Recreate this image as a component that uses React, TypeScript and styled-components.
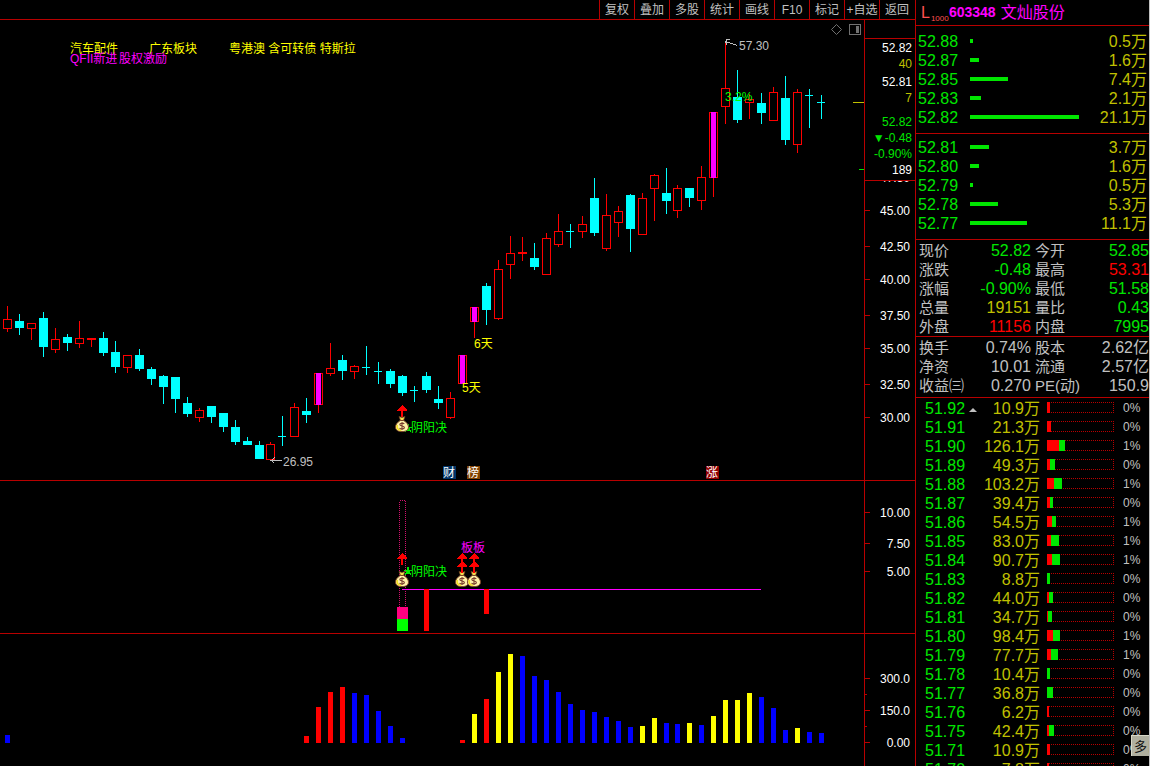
import React from "react";
import styled, { createGlobalStyle } from "styled-components";

const RED = "#ff0000";
const LINE = "#b80000";
const CYAN = "#00ffff";
const MAGENTA = "#ff00ff";
const YELLOW = "#ffff00";
const LIME = "#00ff00";
const GREEN = "#00e600";
const GOLD = "#c0c000";
const GREY = "#c0c0c0";
const WHITE = "#ffffff";
const BLUE = "#0000ff";

const GlobalStyle = createGlobalStyle`
  * { box-sizing: border-box; }
  body {
    margin: 0;
    background: #000;
    color: ${GREY};
    font-family: "Liberation Sans", "Noto Sans CJK SC", sans-serif;
    font-size: 12px;
  }
`;

const Screen = styled.div`
  display: grid;
  grid-template-columns: minmax(0, 1fr) 235px;
  height: 100vh;
  overflow: hidden;
`;

const Main = styled.main`
  display: flex;
  flex-direction: column;
  min-height: 0;
`;

const Toolbar = styled.nav`
  display: flex;
  justify-content: flex-end;
  height: 20px;
  padding-right: 1px;
  border-bottom: 1px solid ${LINE};
`;

const ToolButton = styled.button`
  width: 35px;
  padding: 0;
  border: 0;
  border-left: 1px solid ${LINE};
  background: transparent;
  color: ${GREY};
  font: inherit;
  line-height: 18px;
  white-space: nowrap;
`;

const Charts = styled.div`
  flex: 1;
  min-height: 0;
  display: grid;
  grid-template-columns: minmax(0, 1fr) 51px;
  grid-template-rows: 461fr 153fr 132fr;
`;

const Panel = styled.section<{ $last?: boolean }>`
  min-height: 0;
  overflow: hidden;
  border-bottom: ${(p) => (p.$last ? "0" : `1px solid ${LINE}`)};
`;

const Axis = styled(Panel)`
  position: relative;
  border-left: 1px solid ${LINE};
`;

const Plot = styled.svg`
  display: block;
  width: 100%;
  height: 100%;
  shape-rendering: crispEdges;
`;

const Label = styled.text<{ $color: string }>`
  fill: ${(p) => p.$color};
  font-size: 12px;
  white-space: pre;
`;

const AxisLabel = styled(Label)`
  text-anchor: end;
`;

const QuoteBox = styled.div`
  position: absolute;
  top: 18px;
  left: 0;
  right: 0;
  padding: 1px 3px 2px;
  border: solid ${LINE};
  border-width: 1px 0;
  background: #000;
  text-align: right;
  line-height: 16px;
`;

const QuoteGroup = styled.div<{ $gap?: number }>`
  margin-top: ${(p) => p.$gap ?? 0}px;
`;

const QuoteLine = styled.div<{ $color: string }>`
  color: ${(p) => p.$color};
  white-space: nowrap;
`;

const Sidebar = styled.aside`
  position: relative;
  min-height: 0;
  overflow: hidden;
  border-left: 1px solid ${LINE};
  border-right: 1px solid ${GREY};
  font-size: 16px;
  line-height: 19px;
`;

const Title = styled.header`
  display: flex;
  align-items: center;
  height: 26px;
  padding-left: 5px;
  border-bottom: 1px solid ${LINE};
  color: ${MAGENTA};
  white-space: nowrap;
`;

const Flag = styled.span`
  color: #ff5050;
`;

const FlagCount = styled.sub`
  align-self: flex-end;
  width: 18px;
  margin-left: 1px;
  color: #ff5050;
  font-size: 8px;
  line-height: 12px;
`;

const Code = styled.b`
  font-size: 14px;
`;

const Name = styled.h1`
  margin: 0 0 0 5px;
  font-size: 16px;
  font-weight: 400;
`;

const Block = styled.div<{ $top: number; $bottom: number }>`
  padding: ${(p) => p.$top}px 0 ${(p) => p.$bottom}px;
  border-bottom: 1px solid ${LINE};
`;

const Table = styled.table`
  width: 100%;
  table-layout: fixed;
  border-spacing: 0;
  td {
    height: 19px;
    padding: 0;
    white-space: nowrap;
  }
`;

const LevelTable = styled(Table)`
  margin-top: 1px;
`;

const PriceCell = styled.td<{ $indent: number; $width: number }>`
  width: ${(p) => p.$width}px;
  && { padding-left: ${(p) => p.$indent}px; }
  color: ${GREEN};
`;

const AmountCell = styled.td<{ $width: number }>`
  width: ${(p) => p.$width}px;
  && { padding-right: 2px; }
  color: ${GOLD};
  text-align: right;
`;

const DepthBar = styled.div`
  height: 4px;
  margin-bottom: 1px;
  background: ${GREEN};
`;

const Facts = styled.dl`
  display: grid;
  grid-template-columns: 115px minmax(0, 1fr);
  column-gap: 4px;
  margin: 0;
`;

const Fact = styled.div`
  display: flex;
  justify-content: space-between;
  height: 19px;
  white-space: nowrap;
  &:nth-child(odd) { padding-left: 3px; }
`;

const FactName = styled.dt`
  color: ${GREY};
  font-size: 15px;
`;

const FactValue = styled.dd<{ $color: string }>`
  margin: 0;
  color: ${(p) => p.$color};
`;

const BarCell = styled.td`
  width: 81px;
  && { padding-left: 5px; }
`;

const Track = styled.div`
  display: flex;
  width: 67px;
  height: 11px;
  margin-bottom: 2px;
  border: 1px dotted ${LINE};
`;

const Fill = styled.div<{ $color: string }>`
  height: 11px;
  margin-top: -1px;
  background: ${(p) => p.$color};
  &:first-child { margin-left: -1px; }
`;

const ShareCell = styled.td`
  color: ${GREY};
  font-size: 12px;
`;

const Marker = styled.svg`
  margin-left: 4px;
  vertical-align: middle;
`;

const MultiDayButton = styled.button`
  position: absolute;
  right: 0;
  bottom: 10px;
  width: 18px;
  height: 21px;
  padding: 0 0 0 2px;
  overflow: hidden;
  border: 0;
  border-top: 1px solid #d8d8c8;
  border-left: 1px solid #d8d8c8;
  background: rgba(184, 184, 168, 0.95);
  color: #101010;
  font: inherit;
  font-size: 13px;
  text-align: left;
  white-space: nowrap;
`;

type Kind = "r" | "c" | "m" | "x";
type Candle = [Kind, number, number, number, number];

/* kind, high, body top, body bottom, low */
const candles: Candle[] = [
  ["r", 306, 319, 329, 332], ["c", 314, 321, 328, 335], ["r", 323, 323, 329, 340],
  ["c", 312, 318, 347, 357], ["r", 328, 339, 350, 353], ["c", 334, 337, 343, 351],
  ["r", 321, 338, 344, 348], ["r", 338, 338, 340, 347], ["c", 332, 338, 353, 356],
  ["c", 341, 352, 367, 373], ["r", 355, 355, 368, 373], ["c", 349, 355, 369, 371],
  ["c", 367, 369, 379, 385], ["c", 375, 376, 387, 404], ["c", 377, 377, 399, 413],
  ["c", 397, 403, 414, 417], ["r", 408, 410, 418, 422], ["c", 406, 406, 417, 423],
  ["c", 413, 413, 427, 432], ["c", 420, 427, 442, 445], ["c", 437, 441, 445, 445],
  ["c", 441, 445, 459, 459], ["r", 442, 444, 460, 460], ["x", 416, 436, 437, 446],
  ["r", 403, 407, 437, 437], ["c", 398, 411, 415, 423], ["m", 373, 373, 405, 413],
  ["r", 343, 368, 374, 376], ["c", 355, 360, 371, 380], ["r", 365, 366, 372, 379],
  ["x", 346, 367, 368, 375], ["x", 362, 371, 372, 384], ["c", 369, 371, 384, 388],
  ["c", 375, 376, 393, 396], ["x", 386, 390, 391, 402], ["c", 372, 376, 390, 393],
  ["c", 386, 399, 403, 409], ["r", 392, 398, 418, 419], ["m", 355, 355, 384, 384],
  ["m", 307, 307, 322, 338], ["c", 283, 286, 310, 325], ["r", 260, 269, 319, 320],
  ["r", 236, 253, 265, 279], ["r", 237, 252, 254, 261], ["c", 243, 258, 267, 270],
  ["r", 233, 238, 275, 275], ["r", 214, 231, 245, 247], ["x", 224, 231, 232, 248],
  ["r", 216, 224, 232, 238], ["c", 178, 198, 233, 236], ["r", 194, 215, 249, 251],
  ["r", 206, 211, 223, 237], ["c", 194, 195, 229, 252], ["r", 193, 198, 235, 235],
  ["r", 174, 175, 189, 221], ["c", 168, 193, 201, 214], ["r", 185, 188, 211, 218],
  ["c", 188, 188, 198, 207], ["r", 166, 177, 201, 210], ["m", 112, 112, 178, 197],
  ["r", 41, 88, 107, 124], ["c", 70, 97, 120, 123], ["r", 94, 99, 103, 119],
  ["c", 93, 103, 113, 124], ["r", 87, 92, 121, 121], ["c", 76, 98, 140, 145],
  ["r", 89, 92, 145, 153], ["x", 89, 95, 96, 128], ["x", 95, 102, 103, 119],
];

const candleX = (i: number) => i * 12 + (i < 22 ? 3 : i < 56 ? 2 : 1);

function CandleMark({ index, data }: { index: number; data: Candle }) {
  const [kind, high, top, bottom, low] = data;
  const x = candleX(index);
  const solid = kind === "c" || kind === "x";
  const color = solid ? CYAN : RED;
  return (
    <g fill={color}>
      <rect x={x + 4} y={high} width={1} height={top - high} />
      <rect x={x + 4} y={bottom} width={1} height={low - bottom} />
      {solid || bottom - top < 3 ? (
        <rect x={x} y={top} width={kind === "x" ? 8 : 9} height={bottom - top} />
      ) : (
        <path d={`M${x} ${top}h9v${bottom - top}h-9zM${x + 1} ${top + 1}v${bottom - top - 2}h7v${-(bottom - top - 2)}z`} />
      )}
      {kind === "m" && <rect x={x + 2} y={top} width={5} height={bottom - top} fill={MAGENTA} />}
    </g>
  );
}

function UpArrow({ x, y, length }: { x: number; y: number; length: number }) {
  return <path d={`M${x} ${y}l5 5v1h-4v${length - 6}h-2v${-(length - 6)}h-4v-1z`} fill={RED} />;
}

function MoneyBag({ x, y }: { x: number; y: number }) {
  return (
    <g transform={`translate(${x} ${y})`} shapeRendering="geometricPrecision">
      <path d="M4 .5L7 1.5l3-1-1.500 4h-3z" fill="#f5dc50" stroke="#6b3a20" strokeWidth=".7" />
      <path d="M5.200 4.500h3.600C11 6 13.500 8.300 13.500 11c0 3-2.500 4.600-6.500 4.600S.5 14 .5 11c0-2.700 2.500-5 4.700-6.500z" fill="#fff2a8" stroke="#7a4328" />
      <path d="M2.300 9c-1 3 .7 5 4 5.300" fill="none" stroke="#f2dc20" strokeWidth="1.600" />
      <path d="M9.300 7.800C8 6.800 4.800 6.900 4.800 8.600c0 1.900 4.600.9 4.600 2.900 0 1.800-3.600 1.700-4.900.6M7 6v8" fill="none" stroke="#7a4030" strokeWidth="1.100" />
    </g>
  );
}

function Star({ x, y }: { x: number; y: number }) {
  return (
    <path
      transform={`translate(${x} ${y})`}
      d="M0-5L1.300-1.500H5L2 .8 3.200 4.500 0 2.200-3.200 4.500-2 .8-5-1.500h3.700z"
      fill="#00e600"
    />
  );
}

const badges = [
  { x: 443, text: "财", fill: "#003468" },
  { x: 467, text: "榜", fill: "#804000" },
  { x: 706, text: "涨", fill: "#900000" },
];

function PricePanel() {
  return (
    <Plot viewBox="0 20 864 460" preserveAspectRatio="xMinYMin meet">
      {candles.map((c, i) => <CandleMark key={i} index={i} data={c} />)}
      <Label $color={YELLOW} x={70} y={53}>汽车配件</Label>
      <Label $color={YELLOW} x={149} y={53}>广东板块</Label>
      <Label $color={YELLOW} x={229} y={53}>粤港澳 含可转债 特斯拉</Label>
      <Label $color={MAGENTA} x={70} y={63}>QFII新进</Label>
      <Label $color={MAGENTA} x={119} y={63}>股权激励</Label>
      <path d="M725.500 41.500l12 4M730 39.500h-3l-1.500 2 1.500 3" fill="none" stroke={GREY} />
      <Label $color={GREY} x={739} y={50}>57.30</Label>
      <path d="M270 460.500h12M274.500 457.500l-3 3 3 3" fill="none" stroke={GREY} />
      <Label $color={GREY} x={283} y={466}>26.95</Label>
      <Label $color={LIME} x={725} y={101}>3.2%</Label>
      <Label $color={YELLOW} x={474} y={348}>6天</Label>
      <Label $color={YELLOW} x={462} y={392}>5天</Label>
      <Star x={408} y={428} />
      <UpArrow x={402} y={405} length={12} />
      <MoneyBag x={395} y={416} />
      <Label $color={LIME} x={411} y={432}>阴阳决</Label>
      {badges.map((b) => (
        <g key={b.text}>
          <rect x={b.x} y={466} width={13} height={13} fill={b.fill} />
          <Label $color={WHITE} x={b.x} y={477}>{b.text}</Label>
        </g>
      ))}
      <path d="M836.500 24.500l5 5-5 5-5-5z" fill="none" stroke="#707070" shapeRendering="geometricPrecision" />
      <rect x={849.5} y={24.5} width={11} height={10} rx={1} fill="none" stroke="#707070" />
      <rect x={856} y={26} width={3} height={7} fill="#707070" />
      <rect x={853} y={102} width={11} height={1} fill={GOLD} />
      <rect x={859} y={169} width={5} height={1} fill={GREEN} />
    </Plot>
  );
}

function SignalPanel() {
  return (
    <Plot viewBox="0 481 864 152" preserveAspectRatio="xMinYMin meet">
      <rect x={399.5} y={500.5} width={6} height={107} fill="none" stroke="#d0106c" strokeDasharray="1 1" />
      <rect x={397} y={607} width={11} height={12} fill="#ff0080" />
      <rect x={397} y={619} width={11} height={12} fill={LIME} />
      <rect x={402} y={589} width={359} height={1} fill={MAGENTA} />
      <rect x={424} y={589} width={5} height={42} fill={RED} />
      <rect x={484} y={589} width={5} height={25} fill={RED} />
      <Star x={408} y={571} />
      <MoneyBag x={395} y={571} />
      <UpArrow x={402} y={553} length={12} />
      <Label $color={LIME} x={411} y={576}>阴阳决</Label>
      <MoneyBag x={455} y={571} />
      <MoneyBag x={467} y={571} />
      {[462, 474].map((x) => (
        <g key={x}>
          <UpArrow x={x} y={553} length={12} />
          <UpArrow x={x} y={561} length={12} />
        </g>
      ))}
      <Label $color={MAGENTA} x={461} y={552}>板板</Label>
    </Plot>
  );
}

/* left edge, top edge, colour */
const histogram: [number, number, string][] = [
  [5, 735, BLUE], [304, 736, RED], [316, 707, RED], [328, 692, RED], [340, 687, RED],
  [352, 693, BLUE], [364, 695, BLUE], [376, 711, BLUE], [388, 726, BLUE], [400, 738, BLUE],
  [460, 740, RED], [472, 714, YELLOW], [484, 699, RED], [496, 672, YELLOW], [508, 654, YELLOW],
  [520, 656, BLUE], [532, 676, BLUE], [544, 680, BLUE], [556, 692, BLUE], [568, 704, BLUE],
  [580, 710, BLUE], [592, 712, BLUE], [604, 717, BLUE], [616, 721, BLUE], [628, 727, BLUE],
  [640, 726, YELLOW], [652, 718, YELLOW], [664, 723, BLUE], [675, 724, BLUE], [687, 723, YELLOW],
  [699, 725, BLUE], [711, 716, YELLOW], [723, 700, YELLOW], [735, 700, YELLOW], [747, 693, YELLOW],
  [759, 697, BLUE], [771, 708, BLUE], [783, 730, BLUE], [795, 728, YELLOW], [807, 732, BLUE],
  [819, 733, BLUE],
];

function HistogramPanel() {
  return (
    <Plot viewBox="0 634 864 132" preserveAspectRatio="xMinYMin meet">
      {histogram.map(([x, top, color]) => (
        <rect key={x} x={x} y={top} width={5} height={743 - top} fill={color} />
      ))}
    </Plot>
  );
}

interface ScaleProps {
  top: number;
  height: number;
  marks: [string, number][];
  minor?: number[];
}

function Scale({ top, height, marks, minor = [] }: ScaleProps) {
  return (
    <Plot viewBox={`865 ${top} 50 ${height}`} preserveAspectRatio="xMinYMin meet">
      {marks.map(([text, y]) => (
        <g key={text}>
          <rect x={865} y={y} width={5} height={1} fill={LINE} />
          <AxisLabel $color={WHITE} x={910} y={y + 5}>{text}</AxisLabel>
        </g>
      ))}
      {minor.map((y) => <rect key={y} x={865} y={y} width={2} height={1} fill={LINE} />)}
    </Plot>
  );
}

const asks: [string, number, string][] = [
  ["52.88", 3, "0.5万"], ["52.87", 9, "1.6万"], ["52.85", 38, "7.4万"],
  ["52.83", 11, "2.1万"], ["52.82", 109, "21.1万"],
];
const bids: [string, number, string][] = [
  ["52.81", 19, "3.7万"], ["52.80", 9, "1.6万"], ["52.79", 3, "0.5万"],
  ["52.78", 28, "5.3万"], ["52.77", 57, "11.1万"],
];

function Depth({ rows }: { rows: [string, number, string][] }) {
  return (
    <Table>
      <tbody>
        {rows.map(([price, width, amount]) => (
          <tr key={price}>
            <PriceCell $indent={2} $width={54}>{price}</PriceCell>
            <td><DepthBar style={{ width }} /></td>
            <AmountCell $width={58}>{amount}</AmountCell>
          </tr>
        ))}
      </tbody>
    </Table>
  );
}

const quoteFacts: [string, string, string][] = [
  ["现价", "52.82", GREEN], ["今开", "52.85", GREEN],
  ["涨跌", "-0.48", GREEN], ["最高", "53.31", RED],
  ["涨幅", "-0.90%", GREEN], ["最低", "51.58", GREEN],
  ["总量", "19151", GOLD], ["量比", "0.43", GREEN],
  ["外盘", "11156", RED], ["内盘", "7995", GREEN],
];
const companyFacts: [string, string, string][] = [
  ["换手", "0.74%", GREY], ["股本", "2.62亿", GREY],
  ["净资", "10.01", GREY], ["流通", "2.57亿", GREY],
  ["收益㈢", "0.270", GREY], ["PE(动)", "150.9", GREY],
];

function FactList({ items }: { items: [string, string, string][] }) {
  return (
    <Facts>
      {items.map(([name, value, color]) => (
        <Fact key={name}>
          <FactName>{name}</FactName>
          <FactValue $color={color}>{value}</FactValue>
        </Fact>
      ))}
    </Facts>
  );
}

/* price, amount, red width, green width, share */
const levels: [string, string, number, number, string][] = [
  ["51.92", "10.9万", 3, 0, "0%"], ["51.91", "21.3万", 4, 0, "0%"],
  ["51.90", "126.1万", 12, 6, "1%"], ["51.89", "49.3万", 3, 5, "0%"],
  ["51.88", "103.2万", 7, 8, "1%"], ["51.87", "39.4万", 3, 3, "0%"],
  ["51.86", "54.5万", 5, 4, "1%"], ["51.85", "83.0万", 4, 8, "1%"],
  ["51.84", "90.7万", 5, 8, "1%"], ["51.83", "8.8万", 0, 3, "0%"],
  ["51.82", "44.0万", 2, 4, "0%"], ["51.81", "34.7万", 1, 4, "0%"],
  ["51.80", "98.4万", 6, 7, "1%"], ["51.79", "77.7万", 4, 7, "1%"],
  ["51.78", "10.4万", 0, 3, "0%"], ["51.77", "36.8万", 0, 6, "0%"],
  ["51.76", "6.2万", 2, 0, "0%"], ["51.75", "42.4万", 2, 5, "0%"],
  ["51.71", "10.9万", 3, 0, "0%"], ["51.70", "7.8万", 2, 0, "0%"],
];

function Levels() {
  return (
    <LevelTable>
      <tbody>
        {levels.map(([price, amount, red, green, share], i) => (
          <tr key={price}>
            <PriceCell $indent={9} $width={66}>
              {price}
              {i === 0 && (
                <Marker width="8" height="4" viewBox="0 0 8 4"><path d="M4 0l4 4H0z" fill={GREY} /></Marker>
              )}
            </PriceCell>
            <AmountCell $width={60}>{amount}</AmountCell>
            <BarCell>
              <Track>
                {red > 0 && <Fill $color={RED} style={{ width: red }} />}
                {green > 0 && <Fill $color={GREEN} style={{ width: green }} />}
              </Track>
            </BarCell>
            <ShareCell>{share}</ShareCell>
          </tr>
        ))}
      </tbody>
    </LevelTable>
  );
}

const tools = ["复权", "叠加", "多股", "统计", "画线", "F10", "标记", "+自选", "返回"];

export default function App() {
  return (
    <>
      <GlobalStyle />
      <Screen>
        <Main>
          <Toolbar>
            {tools.map((t) => <ToolButton key={t} type="button">{t}</ToolButton>)}
          </Toolbar>
          <Charts>
            <Panel><PricePanel /></Panel>
            <Axis>
              <Scale
                top={20}
                height={460}
                marks={[
                  ["47.50", 177], ["45.00", 210], ["42.50", 246], ["40.00", 279],
                  ["37.50", 315], ["35.00", 348], ["32.50", 384], ["30.00", 417],
                ]}
              />
              <QuoteBox>
                <QuoteGroup>
                  <QuoteLine $color={WHITE}>52.82</QuoteLine>
                  <QuoteLine $color={GOLD}>40</QuoteLine>
                </QuoteGroup>
                <QuoteGroup $gap={2}>
                  <QuoteLine $color={WHITE}>52.81</QuoteLine>
                  <QuoteLine $color={GOLD}>7</QuoteLine>
                </QuoteGroup>
                <QuoteGroup $gap={8}>
                  <QuoteLine $color={GREEN}>52.82</QuoteLine>
                  <QuoteLine $color={GREEN}>▼-0.48</QuoteLine>
                  <QuoteLine $color={GREEN}>-0.90%</QuoteLine>
                  <QuoteLine $color={WHITE}>189</QuoteLine>
                </QuoteGroup>
              </QuoteBox>
            </Axis>
            <Panel><SignalPanel /></Panel>
            <Axis>
              <Scale top={481} height={152} marks={[["10.00", 512], ["7.50", 543], ["5.00", 571]]} />
            </Axis>
            <Panel $last><HistogramPanel /></Panel>
            <Axis $last>
              <Scale top={634} height={132} marks={[["300.0", 678], ["150.0", 710], ["0.00", 742]]} minor={[694, 726]} />
            </Axis>
          </Charts>
        </Main>
        <Sidebar>
          <Title>
            <Flag>L</Flag>
            <FlagCount>1000</FlagCount>
            <Code>603348</Code>
            <Name>文灿股份</Name>
          </Title>
          <Block $top={6} $bottom={6}><Depth rows={asks} /></Block>
          <Block $top={4} $bottom={6}><Depth rows={bids} /></Block>
          <Block $top={1} $bottom={0}><FactList items={quoteFacts} /></Block>
          <Block $top={1} $bottom={2}><FactList items={companyFacts} /></Block>
          <Levels />
          <MultiDayButton type="button">多日</MultiDayButton>
        </Sidebar>
      </Screen>
    </>
  );
}
